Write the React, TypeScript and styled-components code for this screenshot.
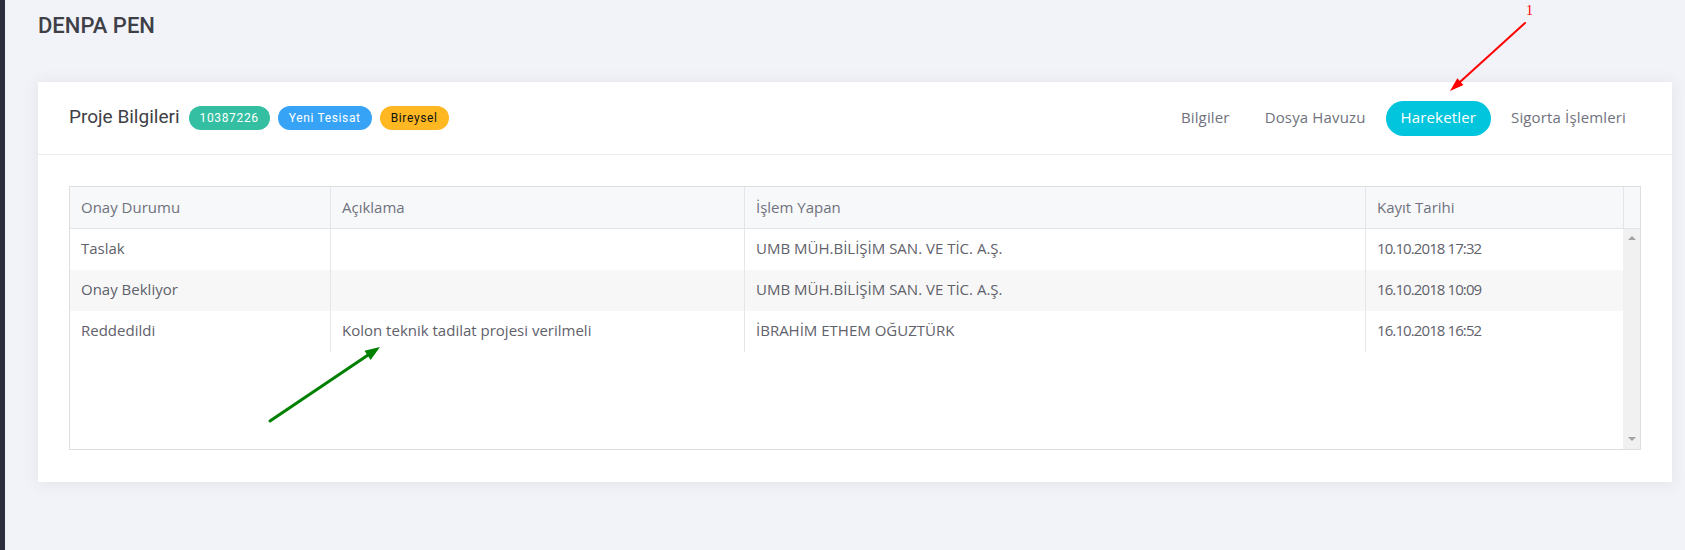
import React from 'react';
import styled, { createGlobalStyle } from 'styled-components';

const GlobalStyle = createGlobalStyle`
  html, body { margin: 0; padding: 0; background: #f2f3f8; }
  body { font-family: "Open Sans", "Liberation Sans", sans-serif; color: #575962; }
  * { box-sizing: border-box; }
`;

const Page = styled.div`
  position: relative;
  display: flex;
  min-height: 550px;
  background: #f2f3f8;
`;

const Aside = styled.aside`
  width: 5px;
  flex-shrink: 0;
  background: #2c2e3e;
`;

const Main = styled.main`
  flex: 1;
  padding: 13px 13px 0 33px;
`;

const PageTitle = styled.h3`
  margin: 0;
  font-family: Roboto, "Open Sans", sans-serif;
  font-size: 22px;
  line-height: 26px;
  font-weight: 500;
  color: #3f4047;
`;

const Portlet = styled.section`
  margin-top: 43px;
  background: #fff;
  box-shadow: 0 1px 15px 1px rgba(69, 65, 78, 0.08);
`;

const PortletHead = styled.header`
  height: 73px;
  display: flex;
  align-items: center;
  justify-content: space-between;
  padding: 0 31px;
  border-bottom: 1px solid #ebedf2;
`;

const HeadTitle = styled.div`
  display: flex;
  align-items: center;
  gap: 8px;
`;

const PortletTitle = styled.h4`
  margin: 0 1px 2px 0;
  font-family: Roboto, "Open Sans", sans-serif;
  font-size: 19px;
  font-weight: 400;
  color: #3f4047;
  line-height: 24px;
`;

const badgeColors = {
  success: { bg: '#34bfa3', fg: '#ffffff' },
  info: { bg: '#36a3f7', fg: '#ffffff' },
  warning: { bg: '#ffb822', fg: '#111111' },
};

const Badge = styled.span<{ $kind: keyof typeof badgeColors }>`
  display: inline-flex;
  align-items: center;
  justify-content: center;
  height: 24px;
  padding: 0 11px 1px;
  border-radius: 12px;
  font-family: Roboto, "Open Sans", sans-serif;
  font-size: 12px;
  font-weight: 400;
  letter-spacing: 0.65px;
  background: ${(p) => badgeColors[p.$kind].bg};
  color: ${(p) => badgeColors[p.$kind].fg};
`;

const Nav = styled.nav`
  display: flex;
  align-items: center;
  gap: 5px;
`;

const NavLink = styled.a<{ $active?: boolean }>`
  display: inline-flex;
  align-items: center;
  height: 35px;
  padding: 0 15px 2px;
  border-radius: 18px;
  font-size: 15px;
  letter-spacing: 0.15px;
  color: ${(p) => (p.$active ? '#ffffff' : '#6f727d')};
  background: ${(p) => (p.$active ? '#00c5dc' : 'transparent')};
  cursor: pointer;
`;

const PortletBody = styled.div`
  padding: 31px 31px 32px 31px;
`;

const Table = styled.div`
  border: 1px solid #dedede;
  display: flex;
  flex-direction: column;
`;

const HeadRow = styled.div`
  display: grid;
  grid-template-columns: 260px 414px 621px 1fr 17px;
  height: 42px;
  background: #f7f8fa;
  border-bottom: 1px solid #e2e5ec;
`;

const HeadCell = styled.div`
  display: flex;
  align-items: center;
  padding: 0 11px 2px;
  font-size: 15px;
  color: #6f727d;
  & + & { border-left: 1px solid #e2e5ec; }
`;

const BodyWrap = styled.div`
  display: flex;
  height: 220px;
`;

const Rows = styled.div`
  flex: 1;
`;

const Row = styled.div<{ $striped?: boolean }>`
  display: grid;
  grid-template-columns: 260px 414px 621px 1fr;
  height: 41px;
  background: ${(p) => (p.$striped ? '#f7f7f7' : '#ffffff')};
`;

const Cell = styled.div<{ $tight?: boolean }>`
  display: flex;
  align-items: center;
  padding: 0 11px 3px;
  font-size: 15px;
  color: #5f616b;
  white-space: nowrap;
  letter-spacing: ${(p) => (p.$tight ? '-0.9px' : 'normal')};
  & + & { border-left: 1px solid #e6e6e6; }
`;

const ScrollTrack = styled.div`
  width: 17px;
  background: #f1f1f1;
  display: flex;
  flex-direction: column;
  justify-content: space-between;
  align-items: center;
  padding: 7px 0 8px;
`;

const ScrollArrow = styled.span<{ $dir: 'up' | 'down' }>`
  width: 0;
  height: 0;
  border-left: 4px solid transparent;
  border-right: 4px solid transparent;
  ${(p) =>
    p.$dir === 'up'
      ? 'border-bottom: 4px solid #a3a3a3;'
      : 'border-top: 4px solid #a3a3a3;'}
`;

const Overlay = styled.svg`
  position: absolute;
  top: 0;
  left: 0;
  pointer-events: none;
`;

const CalloutNumber = styled.span`
  position: absolute;
  left: 1526px;
  top: 3px;
  font-family: "Liberation Serif", serif;
  font-size: 14px;
  color: #ff0000;
  pointer-events: none;
`;

type Pt = [number, number];

function Arrow({ from, to, color, width, head, half }: { from: Pt; to: Pt; color: string; width: number; head: number; half: number }) {
  const dx = to[0] - from[0];
  const dy = to[1] - from[1];
  const len = Math.hypot(dx, dy);
  const ux = dx / len;
  const uy = dy / len;
  const bx = to[0] - head * ux;
  const by = to[1] - head * uy;
  const nx = -uy;
  const ny = ux;
  const pts = `${to[0]},${to[1]} ${bx + half * nx},${by + half * ny} ${bx - half * nx},${by - half * ny}`;
  return (
    <g>
      <line x1={from[0]} y1={from[1]} x2={bx + ux * 2} y2={by + uy * 2} stroke={color} strokeWidth={width} strokeLinecap="round" />
      <polygon points={pts} fill={color} />
    </g>
  );
}

const rows = [
  { status: 'Taslak', desc: '', user: 'UMB MÜH.BİLİŞİM SAN. VE TİC. A.Ş.', date: '10.10.2018 17:32' },
  { status: 'Onay Bekliyor', desc: '', user: 'UMB MÜH.BİLİŞİM SAN. VE TİC. A.Ş.', date: '16.10.2018 10:09' },
  { status: 'Reddedildi', desc: 'Kolon teknik tadilat projesi verilmeli', user: 'İBRAHİM ETHEM OĞUZTÜRK', date: '16.10.2018 16:52' },
];

export default function App() {
  return (
    <>
      <GlobalStyle />
      <Page>
        <Aside />
        <Main>
          <PageTitle>DENPA PEN</PageTitle>
          <Portlet>
            <PortletHead>
              <HeadTitle>
                <PortletTitle>Proje Bilgileri</PortletTitle>
                <Badge $kind="success">10387226</Badge>
                <Badge $kind="info">Yeni Tesisat</Badge>
                <Badge $kind="warning">Bireysel</Badge>
              </HeadTitle>
              <Nav>
                <NavLink>Bilgiler</NavLink>
                <NavLink>Dosya Havuzu</NavLink>
                <NavLink $active>Hareketler</NavLink>
                <NavLink>Sigorta İşlemleri</NavLink>
              </Nav>
            </PortletHead>
            <PortletBody>
              <Table>
                <HeadRow>
                  <HeadCell>Onay Durumu</HeadCell>
                  <HeadCell>Açıklama</HeadCell>
                  <HeadCell>İşlem Yapan</HeadCell>
                  <HeadCell>Kayıt Tarihi</HeadCell>
                  <HeadCell />
                </HeadRow>
                <BodyWrap>
                  <Rows>
                    {rows.map((r, i) => (
                      <Row key={i} $striped={i % 2 === 1}>
                        <Cell>{r.status}</Cell>
                        <Cell>{r.desc}</Cell>
                        <Cell>{r.user}</Cell>
                        <Cell $tight>{r.date}</Cell>
                      </Row>
                    ))}
                  </Rows>
                  <ScrollTrack>
                    <ScrollArrow $dir="up" />
                    <ScrollArrow $dir="down" />
                  </ScrollTrack>
                </BodyWrap>
              </Table>
            </PortletBody>
          </Portlet>
        </Main>
        <Overlay width="1685" height="550" viewBox="0 0 1685 550">
          <Arrow from={[1525, 23]} to={[1450, 91]} color="#ff0000" width={2} head={14} half={4.5} />
          <Arrow from={[270, 421]} to={[380, 347]} color="#008000" width={3} head={15} half={5.5} />
        </Overlay>
        <CalloutNumber>1</CalloutNumber>
      </Page>
    </>
  );
}
